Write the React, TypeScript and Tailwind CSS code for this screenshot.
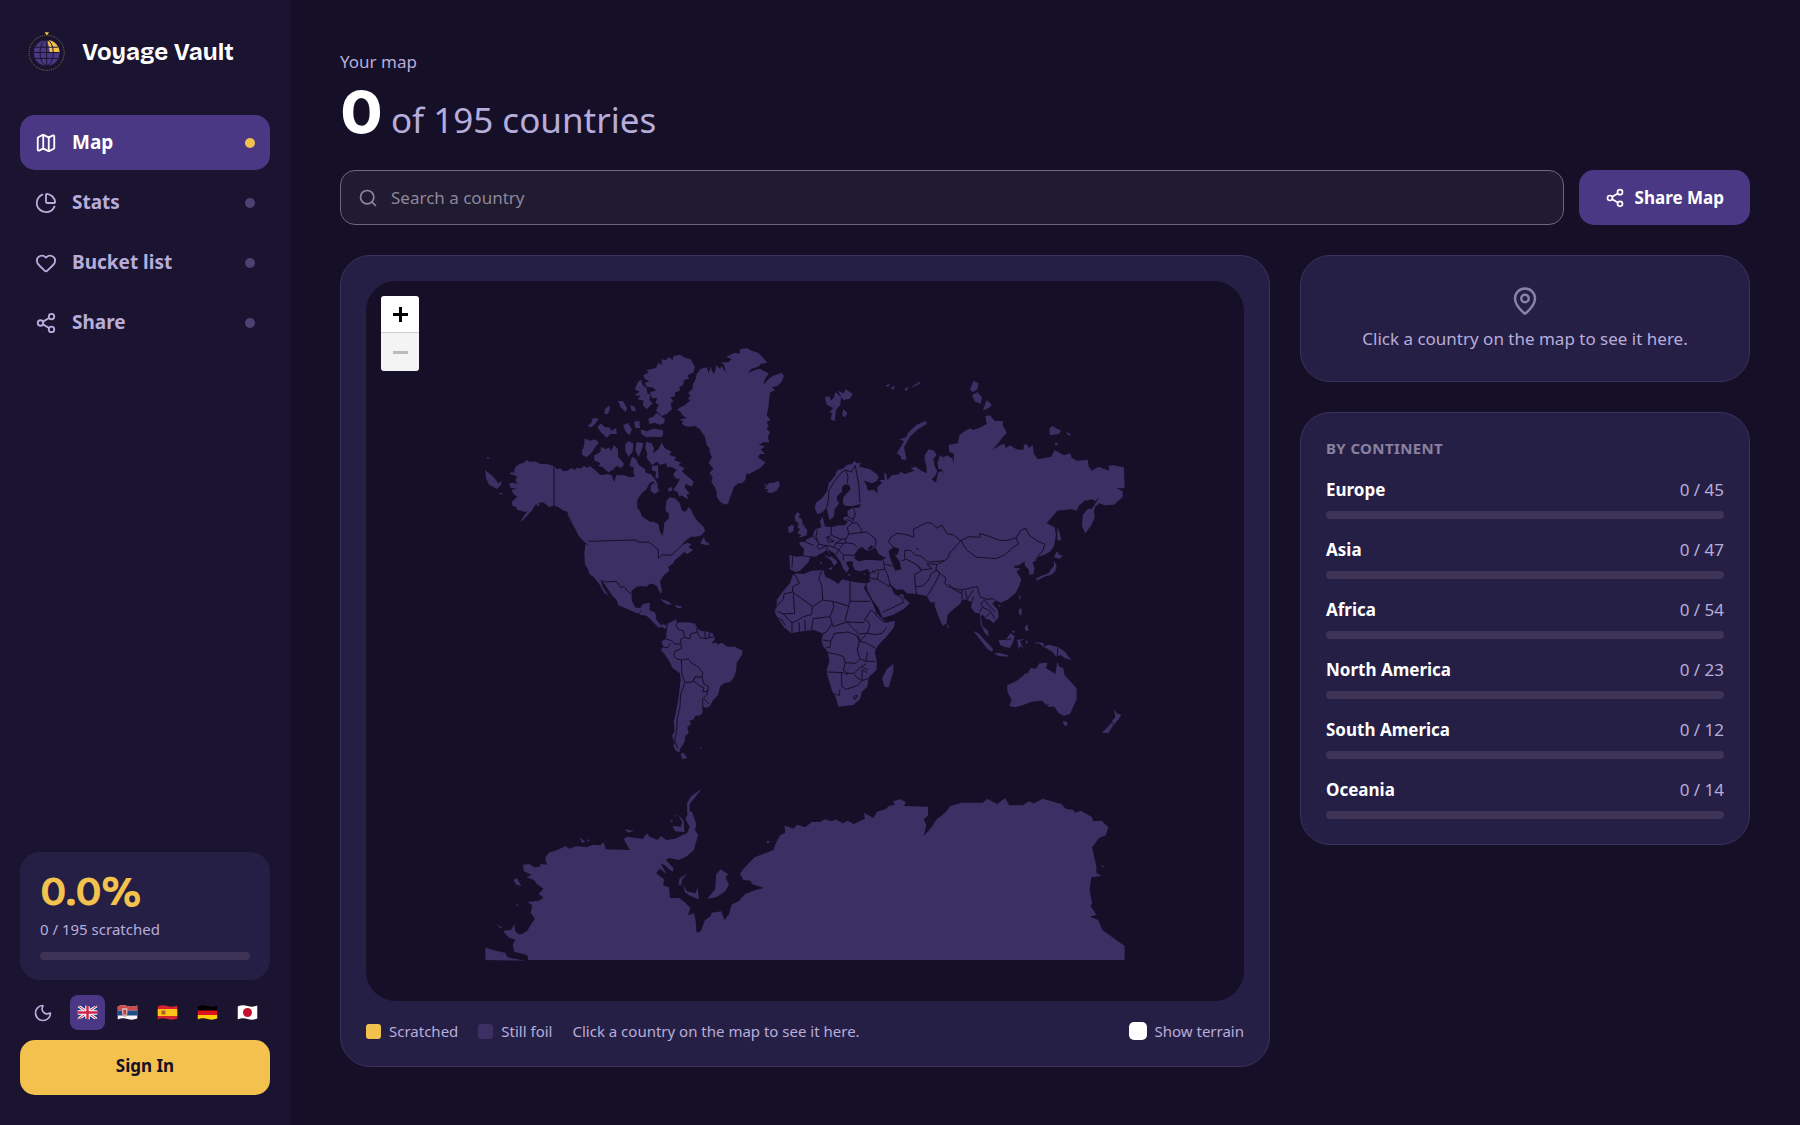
import React from "react";
import { Heart, Map, MapPin, Moon, PieChart, Search, Share2 } from "lucide-react";

const navItems = [
  { label: "Map", icon: Map, active: true },
  { label: "Stats", icon: PieChart, active: false },
  { label: "Bucket list", icon: Heart, active: false },
  { label: "Share", icon: Share2, active: false },
];

const continents = [
  { name: "Europe", visited: 0, total: 45 },
  { name: "Asia", visited: 0, total: 47 },
  { name: "Africa", visited: 0, total: 54 },
  { name: "North America", visited: 0, total: 23 },
  { name: "South America", visited: 0, total: 12 },
  { name: "Oceania", visited: 0, total: 14 },
];

// Each region is drawn on its own grid and moved into place by its transform.
const regions = [
  {
    id: "north-america",
    transform: "translate(480 340) scale(0.3333)",
    land: [
      "M88,402 95,396 102,398 105,382 118,372 132,368 140,360 150,366 165,364 182,372 200,372 222,378 232,388 240,384 250,394 262,392 275,384 284,390 292,382 300,386 312,378 322,384 330,378 345,390 360,404 370,405 382,402 395,405 403,427 408,406 430,405 450,412 462,410 470,395 468,384 478,380 482,398 492,392 500,400 512,402 520,412 530,425 535,440 528,436 520,424 508,430 500,447 485,460 472,480 472,505 480,512 485,528 510,545 522,545 535,553 540,575 548,587 552,560 552,550 567,535 566,520 556,512 560,480 570,472 585,475 600,490 604,508 612,515 620,512 626,500 634,510 640,525 650,540 660,550 672,562 675,574 665,585 650,590 632,590 620,600 608,615 622,608 634,612 626,622 640,630 622,642 612,636 600,648 585,660 578,672 565,680 568,692 552,705 540,725 546,750 542,762 535,748 530,738 520,732 510,731 500,740 485,738 470,740 455,752 455,780 465,802 480,805 490,792 508,788 505,806 498,815 520,818 527,825 528,848 540,858 548,852 560,858 555,868 546,860 536,863 525,852 512,836 500,828 480,822 460,815 430,802 415,796 410,780 398,768 385,750 372,730 362,722 368,740 386,768 372,758 360,736 350,722 340,710 330,704 322,684 315,675 313,640 316,612 325,615 308,600 296,588 285,565 275,548 268,540 262,515 250,512 240,505 228,500 218,497 208,502 196,492 188,486 178,490 165,495 158,510 148,520 132,538 120,546 132,528 142,514 132,516 125,512 112,510 108,500 98,498 95,485 112,470 100,462 95,450 112,446 92,444 88,430 100,428 112,432 106,420 112,410 100,404z",
      "M590,210 602,202 615,195 632,180 622,176 632,168 625,158 638,146 638,134 646,120 650,102 662,86 680,82 686,100 692,80 700,102 706,94 708,75 720,86 725,78 738,98 732,74 722,68 745,66 756,58 738,50 765,38 778,42 780,28 800,24 815,32 835,38 848,52 862,68 842,72 835,80 815,86 805,98 825,90 840,86 850,92 866,100 855,118 850,135 868,115 878,108 905,98 912,108 905,125 892,138 874,142 886,150 870,158 868,175 865,205 860,225 872,240 860,245 866,258 860,266 870,277 864,290 868,308 852,306 836,314 856,320 842,328 856,342 840,342 834,352 857,368 840,385 820,395 806,403 800,400 796,420 786,430 775,430 762,440 756,460 750,472 745,490 736,494 720,485 710,470 710,455 704,440 694,425 698,410 688,400 700,386 686,368 696,352 688,336 690,326 680,315 675,290 666,278 660,268 645,258 628,260 615,258 605,250 610,244 598,238 620,235 608,226 600,214z",
      "M490,105 506,98 500,90 528,84 535,68 545,75 545,58 560,60 565,50 578,60 580,48 600,44 612,52 632,58 645,80 640,98 622,106 628,116 612,120 610,135 598,140 600,152 584,158 586,168 572,172 580,185 572,190 576,208 560,222 545,228 528,212 536,195 526,188 532,174 516,175 510,156 528,152 520,143 500,140 495,128 508,124 494,116z",
      "M472,130 482,118 488,135 500,145 502,160 512,165 508,180 518,190 500,208 488,195 492,182 472,178 482,168 464,165 478,155 464,148z",
      "M505,235 520,230 530,218 545,230 555,238 552,250 538,255 525,248 508,252z",
      "M482,268 500,274 520,266 548,270 550,282 545,292 520,290 500,292 484,282z",
      "M498,305 515,310 522,325 520,340 535,328 545,308 555,325 575,335 568,345 590,352 582,360 604,368 596,376 614,385 606,394 618,405 630,415 641,425 635,440 618,432 614,442 630,462 620,462 624,478 604,466 598,470 592,455 580,450 590,435 600,418 586,415 580,402 590,390 575,380 562,382 558,370 540,375 532,365 516,375 500,355 502,340 496,325z",
      "M342,347 362,335 362,320 378,328 386,322 394,332 402,315 414,328 414,350 425,362 432,372 425,384 410,378 398,390 385,397 368,382 355,378 362,370 344,362z",
      "M306,332 312,318 314,295 330,302 345,298 357,308 345,322 335,338 320,352 306,344z",
      "M322,258 335,248 336,236 348,234 356,238 345,252 334,262z M352,262 362,250 375,262 388,262 395,272 408,264 411,282 392,282 380,293 364,278z M374,208 388,196 390,205 384,222 374,222z M414,182 430,184 442,206 436,216 422,202z M450,194 464,200 468,214 455,212z M430,256 444,248 456,268 448,286 436,274z M462,245 478,242 480,264 466,264z",
      "M470,306 490,310 486,326 476,352 466,330z M436,312 446,304 460,310 458,335 446,350 436,334z M448,378 456,350 468,356 476,374 496,388 494,408 474,398 468,410 460,398 462,382z M516,378 534,376 536,415 526,415 528,395 515,390z M512,438 520,428 530,436 538,452 524,462 512,452z M564,446 574,440 578,450 566,456z",
      "M662,608 672,590 676,604 690,612 684,616 664,612z M170,490 180,492 174,500z M298,584 318,598 326,614 310,604z M15,390 35,406 46,418 54,430 66,424 62,436 50,448 40,440 28,436 18,415z M18,351 30,352 24,357z M55,460 62,458 72,464 62,463z M540,776 560,782 576,792 560,793 550,784z M585,795 608,800 600,805 590,802z",
      "M850,430 862,436 868,428 882,428 896,422 900,436 890,452 874,460 860,456 866,448 852,446 860,440z",
    ],
    borders: [
      "M222,378 222,497 238,505 258,520 275,545",
      "M325,604 465,600 480,607 505,606 522,618 535,630 535,655 545,645 575,645 600,622 618,602 640,598 650,590",
      "M362,722 380,726 410,724 422,742 432,740 445,755 455,762",
      "M478,820 486,808 500,815 M508,834 528,822",
    ],
  },
  {
    id: "south-america",
    transform: "translate(640 590) scale(0.3333)",
    land: [
      "M80,122 84,100 98,94 108,88 112,100 118,97 145,97 165,101 172,115 182,122 195,124 218,130 225,148 214,160 232,158 232,164 246,158 262,170 285,170 308,182 306,195 290,218 288,245 282,262 272,275 252,280 240,290 234,315 220,330 208,350 196,354 186,345 188,366 182,376 165,378 162,388 148,392 153,402 142,412 146,430 136,438 134,455 125,470 118,480 122,487 108,484 100,468 104,458 96,438 104,424 101,395 108,365 116,320 120,285 122,270 120,250 98,235 86,210 72,190 62,180 70,170 64,155 78,146z",
      "M122,492 130,488 142,504 126,508z M180,472 186,475 180,478z",
      "M4,55 18,42 30,38 28,60 46,68 48,88 62,105 80,104 74,112 50,106 36,94 20,76 0,75z M60,28 80,35 94,45 80,42z M106,46 126,50 112,54z M56,0 62,0 66,10z",
    ],
    borders: [
      "M115,92 108,105 114,118 130,122 134,142 122,148 124,176 104,184 102,198 110,207 124,210",
      "M68,170 82,174 92,160 M78,147 95,152 104,162 122,162",
      "M134,142 150,147 152,132 172,126 170,114 M172,126 180,143 196,146 220,140 M194,124 196,145 M208,128 208,142",
      "M124,210 145,207 155,220 174,230 188,248 186,262 166,260 158,276 136,278 126,256 124,210",
      "M166,260 160,272 180,288 192,294 188,306 202,304 206,290 192,282 186,262",
      "M134,278 130,292 122,312 120,350 112,385 110,425 104,450 112,475",
      "M204,298 202,312 188,328 188,345 M190,325 208,342",
    ],
  },
  {
    id: "eurasia-africa-oceania",
    transform: "translate(760 440) scale(0.3333)",
    land: [
      "M88,345 110,350 130,348 132,326 120,315 118,306 136,305 140,298 158,290 164,270 174,265 184,262 180,242 188,230 192,245 190,258 215,262 235,256 254,256 264,246 250,240 252,230 264,230 262,214 272,206 300,202 302,192 280,198 256,198 248,190 250,172 262,158 272,148 268,136 256,132 246,142 246,155 232,168 230,178 238,190 224,208 222,230 208,240 202,212 196,206 186,218 172,222 164,205 168,188 186,175 202,152 206,130 225,108 232,90 248,86 262,74 276,72 284,62 290,70 302,68 298,80 330,88 350,102 356,112 350,124 336,130 312,122 326,148 342,150 352,160 352,142 366,128 358,120 374,120 372,96 380,104 382,120 396,106 420,102 418,94 436,102 462,92 452,84 468,80 484,92 500,100 500,82 494,60 494,46 506,28 522,32 530,46 520,56 524,78 532,94 524,110 515,118 528,128 534,98 546,92 552,108 546,88 536,88 532,70 540,46 550,52 562,46 578,56 580,72 582,42 568,36 566,14 594,10 598,-14 616,-28 630,-35 640,-30 662,-38 680,-48 676,-72 690,-74 704,-58 730,-56 728,-45 740,-22 728,-8 716,8 698,28 724,14 734,12 738,24 750,16 770,28 790,30 792,14 800,12 806,24 818,16 822,42 834,58 874,50 884,30 912,46 930,40 936,54 950,62 984,60 986,80 996,92 1016,80 1046,92 1048,80 1040,78 1060,76 1092,82 1094,145 1070,144 1088,154 1088,172 1062,194 1034,196 1018,190 1006,200 1002,212 1004,234 994,256 976,280 966,258 968,226 984,206 996,206 1018,172 1004,184 998,178 974,182 958,196 950,212 934,208 892,212 868,240 860,250 884,262 888,285 882,318 870,335 850,346 836,350 828,362 818,366 824,385 820,402 808,405 806,388 795,378 794,364 776,376 762,378 764,384 782,385 770,395 784,418 778,438 766,460 745,478 722,488 710,482 696,490 714,510 716,532 700,550 690,540 678,536 668,524 662,530 668,558 684,572 686,590 674,578 662,552 660,520 644,518 632,500 634,486 616,478 606,480 600,492 575,512 562,525 560,550 548,558 536,530 524,498 524,486 512,488 500,468 470,462 440,460 428,448 410,450 386,428 402,458 414,466 430,462 432,474 450,490 430,508 400,524 368,534 356,505 336,478 322,450 318,430 328,426 330,400 324,388 300,394 284,390 278,375 280,365 262,364 258,370 268,385 260,398 250,386 242,366 222,340 204,328 210,345 230,362 232,368 222,378 214,362 196,348 190,338 178,342 168,350 150,352 146,365 134,378 120,392 106,396 90,388z",
      "M110,400 130,402 155,392 190,390 196,410 214,418 235,432 246,418 270,424 300,428 318,430 312,444 336,485 350,520 370,540 376,548 405,542 402,562 378,592 355,615 344,636 350,662 350,690 326,712 322,740 306,755 300,778 280,795 235,800 228,775 216,752 202,705 200,690 208,665 204,636 190,620 184,600 190,582 178,576 160,570 142,572 116,575 94,580 72,562 50,530 44,514 50,500 50,480 72,450 90,430 98,405z",
      "M366,715 380,688 400,672 400,695 386,742 374,742z M742,735 765,725 785,712 798,698 802,702 812,684 828,686 838,670 862,668 858,685 876,695 886,702 892,665 898,680 910,684 914,706 935,728 950,745 950,778 940,800 930,822 912,828 895,818 884,800 862,800 868,790 860,796 845,782 815,785 790,795 765,802 748,798 755,780 742,755z M908,842 922,846 922,858 912,856z",
      "M1062,806 1070,820 1084,824 1076,838 1060,856 1056,842 1066,832z M1054,848 1060,856 1045,880 1026,878 1040,864z",
      "M834,606 852,610 850,620 866,614 896,622 916,636 922,646 935,660 916,655 902,645 888,650 878,636 862,626 846,618z M716,600 736,600 752,580 764,588 760,605 750,624 732,620 720,614z M640,573 656,580 676,602 700,628 696,636 682,626 664,604z M702,640 716,638 745,646 742,650 716,648z M772,600 794,596 780,604 790,625 780,618 776,630z M778,504 786,508 784,528 776,520z M794,562 802,552 806,572 796,572z M756,572 766,572 760,580z M838,608 826,606 830,612z M798,600 804,606 798,614z",
      "M890,334 900,346 910,346 900,356 882,352z M882,362 890,376 886,394 872,406 858,408 846,414 832,422 828,416 842,408 866,400 874,386 882,378z M892,262 898,276 904,298 900,302 892,300z M562,552 568,560 562,566z M776,466 782,468 780,482z M715,494 722,496 718,502z",
      "M104,228 112,216 120,222 116,232 126,238 128,252 142,270 140,286 116,294 124,284 112,280 120,268 112,262 116,250 106,242z M84,262 94,254 102,258 100,274 86,280z M184,262 192,250 196,256z M204,386 218,380 216,390z M180,366 186,366 184,376z M262,402 276,404 266,407z M310,402 318,400 314,406z",
      "M410,40 426,14 446,-24 470,-46 498,-58 500,-48 474,-32 450,-10 432,22 440,60 424,58 422,48z M418,-2 440,-8 432,4z M195,-130 210,-130 212,-118 222,-128 226,-144 244,-128 240,-104 228,-90 224,-56 212,-62 216,-80 208,-84 220,-96 200,-106z M234,-148 250,-140 258,-152 278,-138 270,-124 250,-120 242,-132z M250,-92 262,-82 256,-68 246,-74z",
      "M376,-164 392,-168 384,-158z M392,-156 406,-164 400,-150z M432,-152 446,-160 440,-146z M452,-158 482,-176 478,-168 460,-160z M630,-150 640,-178 656,-170 652,-152 640,-144z M636,-134 652,-144 666,-128 662,-108 644,-116z M668,-88 680,-120 696,-106 686,-96z M868,-34 876,-42 904,-28 896,-18 870,-14z M918,-26 936,-14 924,-14z M884,8 896,10 888,18z",
    ],
    water: [
      "M284,342 296,326 306,320 316,330 328,332 346,322 356,342 376,354 364,362 340,360 318,360 296,364 284,356z",
      "M322,326 334,316 340,320 330,330z",
      "M386,334 400,320 418,326 412,344 404,346 418,362 424,388 406,392 398,374 390,352z",
      "M468,326 474,324 476,330z M326,152 318,140 336,150z M186,340 200,330 214,350 208,352z",
    ],
    borders: [
      "M198,212 206,178 206,152 226,120 246,96 258,90 264,110 262,130 M258,90 274,96 286,76 M286,76 290,100 296,130 298,160 300,188",
      "M264,230 280,238 286,222 282,208 M256,240 266,240 276,246 M280,238 278,250 290,248 306,270 300,278 266,282 262,262 276,250",
      "M214,262 214,282 218,288 244,298 258,296 266,282 M300,278 320,276 346,296 348,314 340,322 M258,296 256,308 282,312 292,322",
      "M172,270 168,290 176,312 170,320 178,328 200,316 222,322 228,308 244,300 M200,290 222,304 206,306 200,292 214,286 M222,322 236,330 228,344 M228,310 256,310 M236,330 250,312 M250,345 282,346 M236,330 250,345 250,362 M176,312 200,318 202,330 M130,348 166,352 M98,348 96,382 M136,306 160,316 M160,288 170,302",
      "M400,322 386,306 392,292 412,280 440,284 462,292 460,268 500,248 516,250 530,264 546,256 562,282 580,284 602,302 582,326 568,340 566,352 554,362 512,366 500,364 486,350 464,344 450,330 434,332 434,356",
      "M602,302 626,290 660,292 660,280 684,288 716,300 738,302 768,294 776,312 756,324 736,344 708,356 688,354 650,352 622,332 602,302",
      "M768,294 782,272 796,264 808,286 834,304 854,312 850,330 836,346 828,360",
      "M554,362 530,374 528,390 545,404 558,414 554,430 566,440 600,450 616,448 640,442 652,440 660,470 680,478 698,476 708,484",
      "M566,432 580,448 606,460 M606,450 606,478 M616,452 622,478 640,450 M632,500 640,470 M660,516 668,500 662,490 674,480 690,500 706,516 M668,502 690,512 704,536 M676,532 690,518",
      "M424,362 440,358 470,374 488,390 516,386 500,372 520,372 530,374 M470,374 484,392 464,404 466,440 488,438 506,420 514,400 530,390 M466,440 470,462 M528,390 540,400 530,420 510,456 500,468",
      "M378,352 362,358 352,350 M370,362 374,388 382,400 M374,372 398,378 M330,400 346,392 374,388 M330,414 352,418 356,396 M352,418 388,440 390,430 382,402 M318,430 332,422 M368,516 392,506 428,488 M400,460 428,474 430,490",
      "M104,402 118,430 98,440 98,456 72,462 70,478 50,498 M98,456 158,500 188,480 186,440 176,416 186,392 M188,480 218,484 266,498 270,484 270,424 M270,484 330,484",
      "M100,460 104,520 70,522 52,514 M158,500 154,524 130,530 112,542 96,548 86,540 70,522 M218,484 222,500 210,530 160,536 154,570 M134,540 136,572 M118,548 118,574 M96,548 96,578 M50,532 66,540 76,556",
      "M210,530 216,550 200,576 188,580 M216,550 220,560 260,546 270,556 296,582 M266,498 256,540 260,546 M260,546 310,548 316,536 334,510 350,524 M320,540 330,556 322,580 296,582 M344,522 374,548 M322,580 346,584 366,580 380,562",
      "M188,600 212,604 224,580 264,576 290,586 298,604 292,630 300,656 286,670 256,668 250,650 234,644 206,638 M212,604 210,622 196,624 M298,604 318,608 352,628 M296,588 300,604 318,584 M300,656 318,664 346,664 M322,636 318,664",
      "M256,668 250,692 264,700 282,700 304,680 318,672 M202,696 250,698 264,704 M244,700 246,740 258,748 290,738 306,722 324,716 M240,748 238,766 222,762 M282,702 290,712 306,722 306,690 322,698 M304,680 324,690 M284,768 292,766 286,778 280,774 284,768",
      "M894,622 892,650 M738,600 754,596 M336,392 346,400",
    ],
  },
  {
    id: "antarctica",
    transform: "translate(470 770) scale(0.4273 0.3333)",
    land: [
      "M36,533 60,542 82,548 88,562 104,566 128,572 36,570z",
      "M136,566 134,556 118,550 104,546 100,524 106,508 92,504 84,494 78,482 96,480 104,462 106,484 112,492 122,492 134,482 142,464 152,446 142,428 146,406 134,396 162,392 172,382 160,372 172,356 156,342 150,330 132,322 144,314 126,304 124,284 140,282 150,292 164,290 164,282 180,284 176,264 184,248 204,240 224,228 232,236 250,228 272,232 288,224 306,226 312,216 318,238 374,240 360,208 366,200 404,206 414,190 420,200 440,210 446,198 460,210 480,206 496,196 508,190 514,170 504,148 512,124 520,126 530,165 526,180 534,194 524,240 506,260 488,270 466,264 458,270 476,294 474,306 456,286 446,280 460,312 444,296 436,310 454,328 452,346 466,352 468,384 490,384 504,398 516,414 510,436 524,430 528,450 530,488 540,484 550,450 562,440 566,428 588,424 596,450 606,432 612,404 630,392 644,372 668,360 688,354 660,342 656,332 640,330 632,312 640,296 666,262 710,240 716,218 726,196 738,188 736,166 756,176 766,164 784,172 800,156 820,156 830,148 846,154 856,148 872,160 884,152 898,162 924,146 922,128 944,144 952,126 974,116 980,108 994,104 990,94 1006,88 1020,96 1016,108 1072,110 1072,136 1062,148 1068,166 1062,198 1080,172 1092,148 1112,128 1124,108 1150,98 1200,98 1210,86 1234,102 1252,84 1262,106 1294,106 1308,94 1320,100 1340,86 1384,102 1394,116 1412,120 1416,128 1430,122 1456,142 1458,154 1478,152 1494,172 1488,196 1472,204 1456,232 1466,290 1466,308 1478,318 1454,322 1450,360 1456,400 1452,408 1466,434 1450,440 1470,450 1480,480 1532,528 1532,570 136,570z",
      "M508,130 508,98 518,78 542,56 528,80 514,102 514,130z M486,132 500,152 502,186 480,184 474,168 494,170 496,156z M556,386 574,356 576,314 586,298 604,312 598,322 606,344 596,366 576,382z M488,344 490,326 508,310 496,330 494,346z M498,344 508,364 528,370 532,352 536,388 516,378 504,368z",
      "M102,330 110,324 120,348 108,344z M106,402 114,404 112,410z M256,202 262,208 270,216 262,218z M274,208 280,210 276,216z M362,178 384,182 370,188z M62,462 76,474 70,474z M694,212 702,214 696,222z M1478,286 1486,290 1480,292z M468,148 476,152 470,156z M480,134 484,138 480,140z",
    ],
    borders: [],
  },
];

function Logo() {
  return (
    <svg viewBox="86 92 114 124" className="h-[41px] w-[38px] shrink-0" aria-hidden="true">
      <path d="M136,96 h13 l-5,8 h-3z" fill="#f2c14e" />
      <circle cx="142" cy="158" r="53" fill="none" stroke="#8a6f45" strokeWidth="3" strokeDasharray="3 3" />
      <circle cx="142" cy="158" r="39" fill="#4a3885" />
      <path d="M144,119 A39,39 0 0 1 181,157 L152,157z" fill="#f2c14e" />
      <g fill="none" stroke="#1b1430" strokeWidth="3">
        <path d="M103,157 H181 M108,141 H176 M108,175 H176 M142,119 V197" />
        <ellipse cx="142" cy="158" rx="20" ry="39" />
      </g>
    </svg>
  );
}

function Flag({ code }: { code: string }) {
  return (
    <svg viewBox="0 0 42 30" className="h-[15px] w-[21px]" aria-hidden="true">
      <clipPath id={`flag-${code}`}>
        <path d="M1,3 Q11,-1 21,2 T41,1 V27 Q31,31 21,28 T1,29z" />
      </clipPath>
      <g clipPath={`url(#flag-${code})`}>
        {code === "gb" && (
          <>
            <rect width="42" height="30" fill="#1f3a83" />
            <path d="M0,0 42,30 M42,0 0,30" stroke="#fff" strokeWidth="6" />
            <path d="M0,0 42,30 M42,0 0,30" stroke="#d0224a" strokeWidth="2" />
            <path d="M21,0 V30 M0,15 H42" stroke="#fff" strokeWidth="9" />
            <path d="M21,0 V30 M0,15 H42" stroke="#d0224a" strokeWidth="5" />
          </>
        )}
        {code === "rs" && (
          <>
            <rect width="42" height="30" fill="#f5f5f5" />
            <rect width="42" height="11" fill="#cf4a4a" />
            <rect y="11" width="42" height="10" fill="#1f4a86" />
            <path d="M10,6 h11 v10 q0,6 -5,8 q-6,-2 -6,-8z" fill="#d9a3a0" />
            <path d="M13,10 h5 v9 h-5z" fill="#b5404a" />
          </>
        )}
        {code === "es" && (
          <>
            <rect width="42" height="30" fill="#d3232e" />
            <rect y="8" width="42" height="14" fill="#fcc419" />
            <path d="M9,11 h8 v8 h-8z" fill="#a8602c" />
          </>
        )}
        {code === "de" && (
          <>
            <rect width="42" height="30" fill="#000" />
            <rect y="11" width="42" height="10" fill="#e01020" />
            <rect y="20" width="42" height="10" fill="#fccc0a" />
          </>
        )}
        {code === "jp" && (
          <>
            <rect width="42" height="30" fill="#fff" />
            <circle cx="21" cy="15" r="9" fill="#c8102e" />
          </>
        )}
      </g>
    </svg>
  );
}

const languages = [
  { code: "gb", label: "English" },
  { code: "rs", label: "Srpski" },
  { code: "es", label: "Español" },
  { code: "de", label: "Deutsch" },
  { code: "jp", label: "日本語" },
];

function ProgressBar({ value, total }: { value: number; total: number }) {
  return (
    <div className="h-2 w-full overflow-hidden rounded-full bg-[#3c3357]">
      <div className="h-full bg-[#f2c14e]" style={{ width: `${(value / total) * 100}%` }} />
    </div>
  );
}

function Sidebar() {
  return (
    <aside className="sticky top-0 flex h-screen w-[290px] shrink-0 flex-col bg-[#1b1430] px-5 py-[30px]">
      <div className="flex h-[43px] items-center gap-4 px-2">
        <Logo />
        <span className="font-['Bricolage_Grotesque',Inter,sans-serif] text-[24px] font-bold text-white">
          Voyage Vault
        </span>
      </div>

      <nav className="mt-[42px] flex flex-col gap-[5px]">
        {navItems.map(({ label, icon: Icon, active }) => (
          <a
            key={label}
            href="#"
            className={
              active
                ? "flex h-[55px] items-center gap-[15px] rounded-[15px] bg-[#4a3885] px-[15px] text-[19px] font-bold text-white"
                : "flex h-[55px] items-center gap-[15px] rounded-[15px] px-[15px] text-[19px] font-bold text-[#b7addb]"
            }
          >
            <Icon size={22} strokeWidth={2} />
            <span className="flex-1">{label}</span>
            <span
              className={
                active
                  ? "size-[10px] rounded-full bg-[#f2c14e]"
                  : "size-[10px] rounded-full bg-[#4d4173]"
              }
            />
          </a>
        ))}
      </nav>

      <div className="mt-auto rounded-[20px] bg-[#261f45] p-5">
        <div className="font-['Bricolage_Grotesque',Inter,sans-serif] text-[40px] font-bold leading-10 text-[#f2c14e]">
          0.0%
        </div>
        <div className="mt-[5px] text-[15px] leading-6 text-[#b7addb]">0 / 195 scratched</div>
        <div className="mt-[11px]">
          <ProgressBar value={0} total={195} />
        </div>
      </div>

      <div className="mt-[15px] flex items-center gap-[10px] px-[5px]">
        <button
          type="button"
          aria-label="Toggle theme"
          className="flex size-[35px] items-center justify-center text-[#b7addb]"
        >
          <Moon size={20} strokeWidth={2} />
        </button>
        <div className="flex gap-[5px]">
          {languages.map(({ code, label }) => (
            <button
              key={code}
              type="button"
              aria-label={label}
              className={
                code === "gb"
                  ? "flex size-[35px] items-center justify-center rounded-lg bg-[#4a3885]"
                  : "flex size-[35px] items-center justify-center rounded-lg"
              }
            >
              <Flag code={code} />
            </button>
          ))}
        </div>
      </div>

      <button
        type="button"
        className="mt-[10px] h-[55px] shrink-0 rounded-[15px] bg-[#f2c14e] pb-1 text-[17px] font-bold text-[#150f28]"
      >
        Sign In
      </button>
    </aside>
  );
}

function WorldMap() {
  return (
    <div className="relative flex h-[720px] items-center justify-center overflow-hidden rounded-[30px] bg-[#150f28]">
      <svg viewBox="485 321 640 640" className="h-[640px] w-[640px]" role="img" aria-label="World map">
        {regions.map((region) => (
          <g key={region.id} transform={region.transform}>
            {region.land.map((d) => (
              <path key={d} d={d} fill="#3b2f63" />
            ))}
            {region.water?.map((d) => (
              <path key={d} d={d} fill="#150f28" />
            ))}
            {region.borders.map((d) => (
              <path key={d} d={d} fill="none" stroke="#150f28" strokeWidth="3" strokeLinejoin="round" />
            ))}
          </g>
        ))}
      </svg>
      <div className="absolute left-[15px] top-[15px] flex w-[38px] flex-col overflow-hidden rounded-[3px]">
        <button
          type="button"
          aria-label="Zoom in"
          className="flex h-[37px] items-center justify-center border-b border-[#ccc] bg-white text-black"
        >
          <svg viewBox="0 0 15 15" className="size-[15px]" aria-hidden="true">
            <path d="M0,7.5 H15 M7.5,0 V15" stroke="currentColor" strokeWidth="3" />
          </svg>
        </button>
        <button
          type="button"
          aria-label="Zoom out"
          disabled
          className="flex h-[38px] items-center justify-center bg-[#f4f4f4] text-[#bbb]"
        >
          <svg viewBox="0 0 15 15" className="size-[15px]" aria-hidden="true">
            <path d="M0,7.5 H15" stroke="currentColor" strokeWidth="3" />
          </svg>
        </button>
      </div>
    </div>
  );
}

function MapCard() {
  return (
    <section className="min-w-0 flex-1 rounded-[30px] border border-[#3a325a] bg-[#261f45] p-[25px]">
      <WorldMap />
      <div className="mt-5 flex items-center gap-5 text-[15px] leading-5 text-[#b7addb]">
        <span className="flex items-center gap-2">
          <span className="size-[15px] rounded-[3px] bg-[#f2c14e]" />
          Scratched
        </span>
        <span className="flex items-center gap-2">
          <span className="size-[15px] rounded-[3px] bg-[#3b2f63]" />
          Still foil
        </span>
        <span>Click a country on the map to see it here.</span>
        <label className="ml-auto flex items-center gap-2">
          <input type="checkbox" className="size-[18px] appearance-none rounded-[5px] bg-white" />
          Show terrain
        </label>
      </div>
    </section>
  );
}

export default function App() {
  return (
    <div className="flex min-h-screen bg-[#150f28] font-['Noto_Sans',sans-serif] text-[#b7addb]">
      <Sidebar />
      <main className="min-w-0 flex-1 p-[50px]">
        <p className="text-[17px] leading-[23px]">Your map</p>
        <h1 className="mt-1 flex items-baseline gap-2 leading-[70px]">
          <span className="font-['Bricolage_Grotesque',Inter,sans-serif] text-[64px] font-extrabold text-white">
            0
          </span>
          <span className="text-[35px]">of 195 countries</span>
        </h1>

        <div className="mt-[15px] flex gap-[15px]">
          <label className="flex h-[55px] flex-1 items-center gap-[13px] rounded-[15px] border border-[#6c6680] bg-[#201b30] px-[17px]">
            <Search size={20} strokeWidth={2} className="text-[#8d879c]" />
            <input
              type="text"
              aria-label="Search a country"
              placeholder="Search a country"
              className="flex-1 bg-transparent text-[17px] text-white outline-none placeholder:text-[#8d879c]"
            />
          </label>
          <button
            type="button"
            className="flex h-[55px] items-center gap-[10px] rounded-[15px] bg-[#4a3885] px-[26px] text-[17px] font-bold text-white"
          >
            <Share2 size={20} strokeWidth={2} />
            Share Map
          </button>
        </div>

        <div className="mt-[30px] flex items-start gap-[30px]">
          <MapCard />
          <div className="flex w-[450px] shrink-0 flex-col gap-[30px]">
            <section className="flex flex-col items-center rounded-[30px] border border-[#3a325a] bg-[#261f45] px-[25px] py-[30px] text-[17px]">
              <MapPin size={30} className="text-[#8a81a8]" />
              <p className="mt-[10px] leading-[25px]">Click a country on the map to see it here.</p>
            </section>

            <section className="rounded-[30px] border border-[#3a325a] bg-[#261f45] p-[25px]">
              <h2 className="text-[15px] font-bold uppercase leading-5 tracking-wide text-[#8a81a0]">
                By continent
              </h2>
              <ul className="mt-[19px] flex flex-col gap-[18px]">
                {continents.map(({ name, visited, total }) => (
                  <li key={name}>
                    <div className="mb-[9px] flex justify-between text-[17px] leading-[25px]">
                      <span className="font-bold text-white">{name}</span>
                      <span>
                        {visited} / {total}
                      </span>
                    </div>
                    <ProgressBar value={visited} total={total} />
                  </li>
                ))}
              </ul>
            </section>
          </div>
        </div>
      </main>
    </div>
  );
}
